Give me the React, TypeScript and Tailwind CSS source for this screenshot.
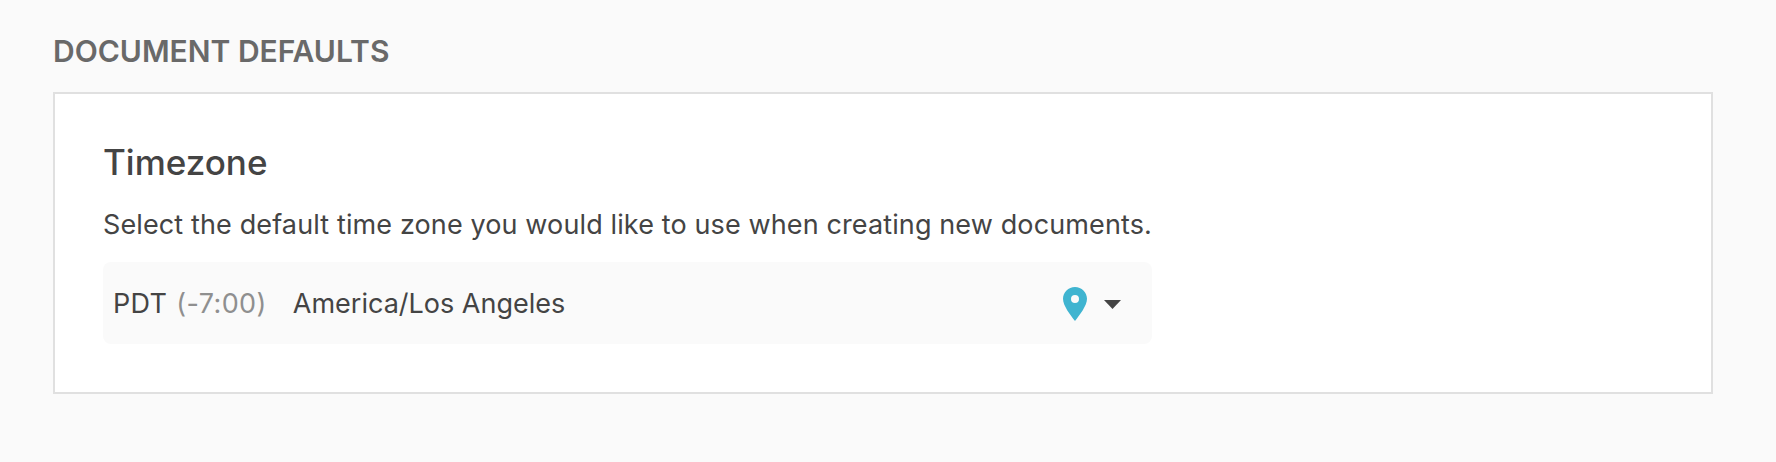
export default function App() {
  return (
    <div className="min-h-[462px] bg-[#fafafa] px-[53px] pt-[33px] font-['Inter',sans-serif] text-[#444444]">
      <h2 className="text-[30px] leading-[36px] font-semibold text-[#696969]">DOCUMENT DEFAULTS</h2>
      <section className="mt-[23px] h-[302px] w-[1660px] border-2 border-[#e0e0e0] bg-white pl-[48px] pt-[46px]">
        <h3 className="text-[35px] leading-[45px] font-medium">Timezone</h3>
        <p className="mt-[22px] text-[27px] leading-[36px] tracking-[0.12px]">
          Select the default time zone you would like to use when creating new documents.
        </p>
        <div className="mt-[19px] flex h-[82px] w-[1049px] items-center rounded-lg bg-[#fafafa] pl-[10px] pr-[31px] pt-[2px] text-[27px]">
          <span className="tracking-[0.3px]">PDT</span>
          <span className="ml-[9px] tracking-[0.4px] text-[#8f8f8f]">(-7:00)</span>
          <span className="ml-[26px]">America/Los Angeles</span>
          <svg className="ml-auto" width="24" height="34" viewBox="0 0 24 34">
            <path
              fill="#3fb4d0"
              fillRule="evenodd"
              d="M12 0C5.4 0 0 5.2 0 11.800c0 7 7.600 16.600 12 22.200 4.400-5.600 12-15.200 12-22.200C24 5.200 18.600 0 12 0Zm0 8a4 4 0 1 1 0 8 4 4 0 0 1 0-8Z"
            />
          </svg>
          <svg className="ml-[17px]" width="17" height="9" viewBox="0 0 17 9">
            <path fill="#444444" d="M0 0h17L8.500 9Z" />
          </svg>
        </div>
      </section>
    </div>
  );
}
